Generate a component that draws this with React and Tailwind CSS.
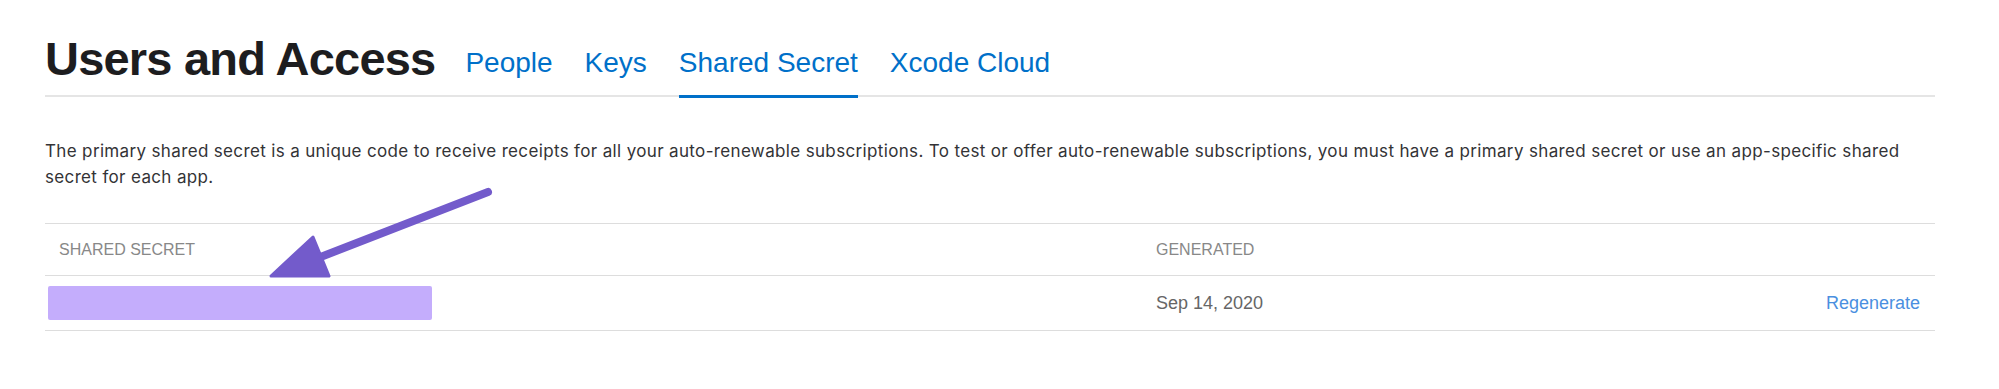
import React from 'react';

const tabs = ['People', 'Keys', 'Shared Secret', 'Xcode Cloud'];

const Arrow = () => (
    <svg
        className="absolute left-0 top-0 pointer-events-none"
        width="1999"
        height="389"
        viewBox="0 0 1999 389"
    >
        <line x1="488" y1="192" x2="318" y2="258" stroke="#735bcb" strokeWidth="8" strokeLinecap="round" />
        <polygon points="271,276 313,237 329,276" fill="#735bcb" stroke="#735bcb" strokeWidth="3" strokeLinejoin="round" />
    </svg>
);

const App = () => {
    return (
        <div className="relative w-[1999px] h-[389px] bg-white font-['Liberation_Sans',Arial,sans-serif]">
            <div className="w-[1890px] ml-[45px] pt-[35px]">
                {/* Heading + tabs */}
                <div className="flex items-end border-b-2 border-[#e5e5e5]">
                    <h1 className="text-[47px] leading-none font-bold tracking-[-0.8px] text-[#1d1d1f] mb-[13px] mr-[30px]">
                        Users and Access
                    </h1>
                    <nav className="flex gap-[32px]">
                        {tabs.map((tab) => (
                            <a
                                key={tab}
                                className={
                                    tab === 'Shared Secret'
                                        ? 'text-[28px] leading-none text-[#0070c9] pb-[18px] border-b-[3px] border-[#0070c9] -mb-[3px]'
                                        : 'text-[28px] leading-none text-[#0070c9] pb-[18px] border-b-[3px] border-transparent -mb-[3px]'
                                }
                            >
                                {tab}
                            </a>
                        ))}
                    </nav>
                </div>

                {/* Description */}
                <p className="mt-[41px] font-['Inter',sans-serif] text-[17px] leading-[26px] tracking-[0.35px] text-[#333336]">
                    The primary shared secret is a unique code to receive receipts for all your auto-renewable subscriptions. To test or offer auto-renewable subscriptions, you must have a primary shared secret or use an app-specific shared secret for each app.
                </p>

                {/* Table */}
                <div className="mt-[33px] border-t border-[#dddddd]">
                    <div className="grid grid-cols-[1111px_1fr_auto] items-center h-[52px] border-b border-[#dddddd]">
                        <div className="pl-[14px] text-[16px] uppercase text-[#888888]">Shared Secret</div>
                        <div className="text-[16px] uppercase text-[#888888]">Generated</div>
                        <div></div>
                    </div>
                    <div className="grid grid-cols-[1111px_1fr_auto] items-center h-[55px] border-b border-[#dddddd]">
                        <div className="pl-[3px]">
                            <div className="w-[384px] h-[34px] rounded-[2px] bg-[#c4adfc]"></div>
                        </div>
                        <div className="text-[18px] text-[#666666]">Sep 14, 2020</div>
                        <a className="pr-[15px] text-[18px] text-[#4a8fe0]">Regenerate</a>
                    </div>
                </div>
            </div>
            <Arrow />
        </div>
    );
};

export default App;
